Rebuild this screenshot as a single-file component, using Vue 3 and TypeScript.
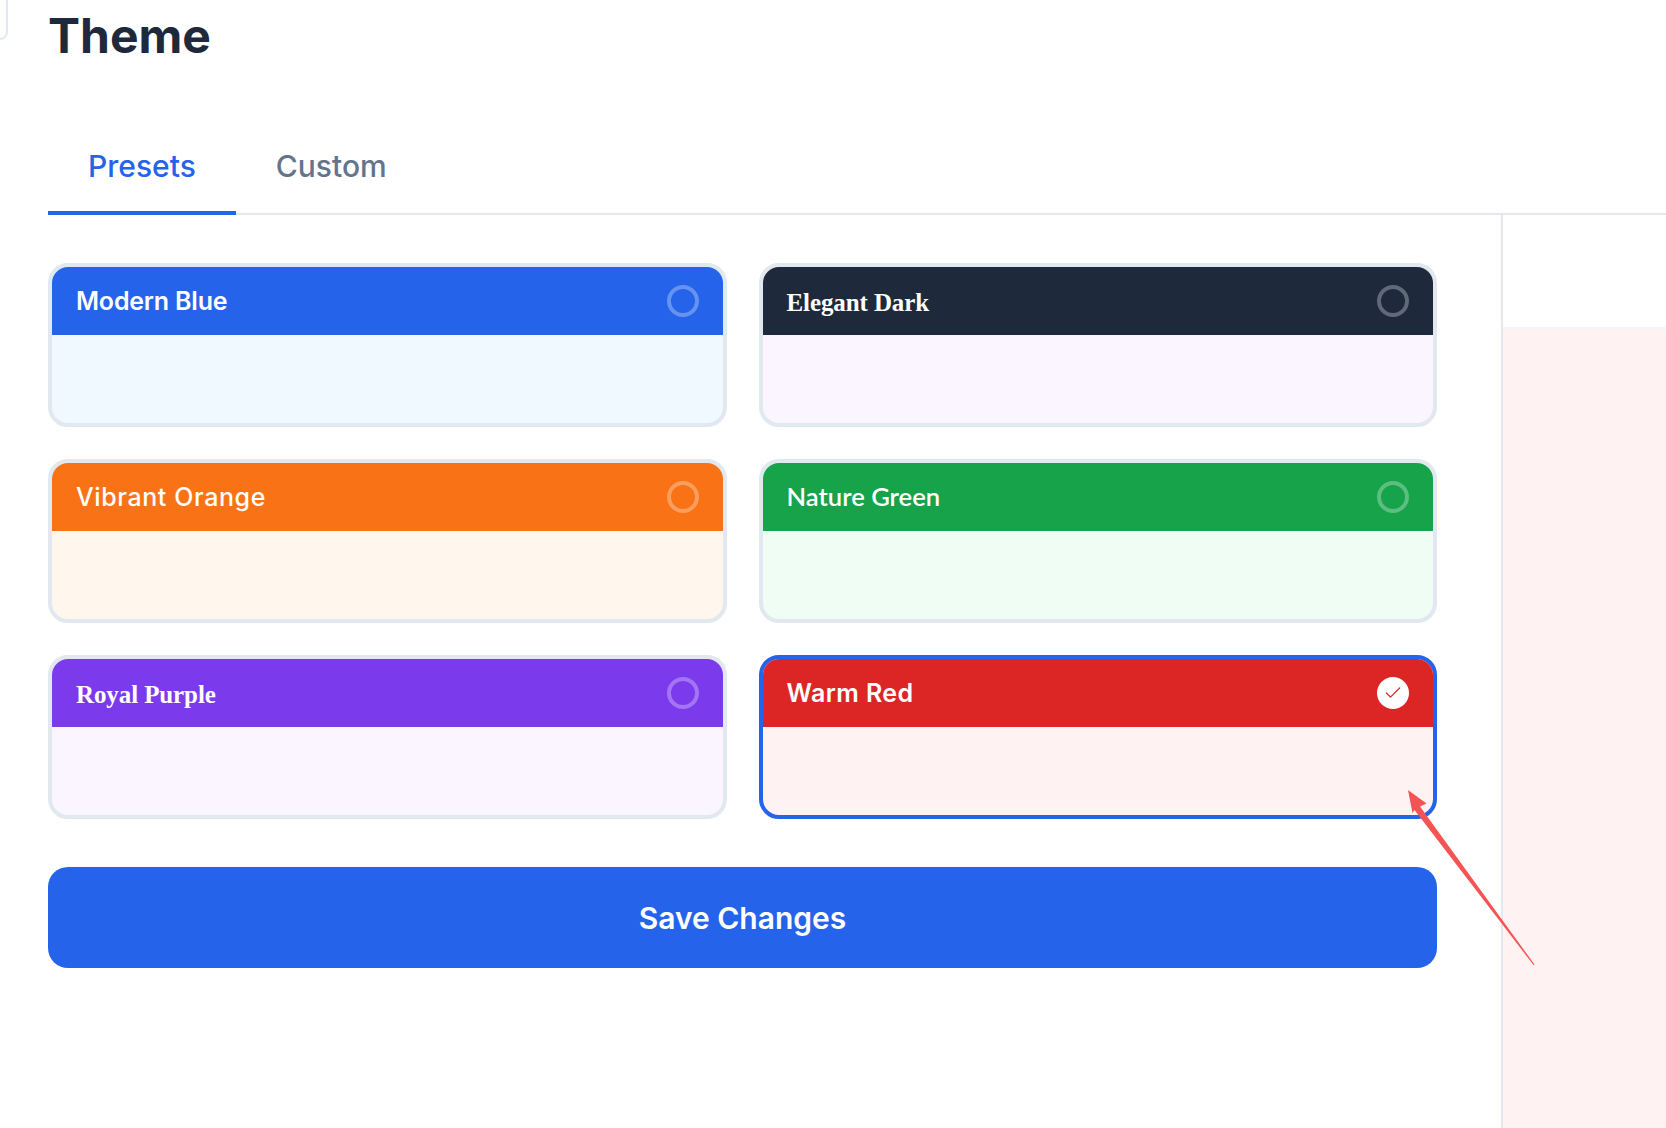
<script setup lang="ts">
import { ref } from 'vue'

interface ThemePreset {
  id: string
  name: string
  primary: string
  surface: string
  font: string
  tracking: number
}

const presets: ThemePreset[] = [
  { id: 'blue', name: 'Modern Blue', primary: '#2563eb', surface: '#f0f9ff', font: 'font-poppins', tracking: -0.2 },
  { id: 'dark', name: 'Elegant Dark', primary: '#1e293b', surface: '#faf5ff', font: 'font-playfair', tracking: -0.1 },
  { id: 'orange', name: 'Vibrant Orange', primary: '#f97316', surface: '#fff7ed', font: 'font-montserrat', tracking: 0.6 },
  { id: 'green', name: 'Nature Green', primary: '#16a34a', surface: '#f0fdf4', font: 'font-raleway', tracking: 0 },
  { id: 'purple', name: 'Royal Purple', primary: '#7c3aed', surface: '#faf5ff', font: 'font-playfair', tracking: -0.1 },
  { id: 'red', name: 'Warm Red', primary: '#dc2626', surface: '#fef2f2', font: 'font-poppins', tracking: 0.4 },
]

const selected = ref('red')
const tab = ref('presets')
</script>

<template>
  <div class="page">
    <div class="corner-box"></div>
    <h1 class="title">Theme</h1>

    <div class="tabs">
      <button class="tab" :class="{ active: tab === 'presets' }" @click="tab = 'presets'">Presets</button>
      <button class="tab" :class="{ active: tab === 'custom' }" @click="tab = 'custom'">Custom</button>
    </div>

    <div class="main">
      <div class="editor">
        <div class="preset-grid">
          <div
            v-for="preset in presets"
            :key="preset.id"
            class="preset-card"
            :class="{ selected: selected === preset.id }"
            :style="{ background: preset.surface }"
            @click="selected = preset.id"
          >
            <div class="preset-head" :style="{ background: preset.primary }">
              <span class="preset-name" :class="preset.font" :style="{ letterSpacing: preset.tracking + 'px' }">{{ preset.name }}</span>
              <span v-if="selected === preset.id" class="radio checked">
                <svg width="20" height="20" viewBox="0 0 24 24" fill="none" :stroke="preset.primary" stroke-width="1.5" stroke-linecap="round" stroke-linejoin="round">
                  <path d="M20 6 9 17l-5-5" />
                </svg>
              </span>
              <span v-else class="radio"></span>
            </div>
          </div>
        </div>
        <button class="save-btn">Save Changes</button>
      </div>

      <div class="preview">
        <div class="preview-bar"></div>
        <div class="preview-body"></div>
      </div>
    </div>

    <!-- annotation arrow -->
    <svg class="arrow" width="1666" height="1128" viewBox="0 0 1666 1128">
      <path d="M1408 790 L1426.5 803.5 L1420 806.5 L1534.5 964.5 L1533.5 965 L1414.5 810 L1412.5 813 Z" fill="#f55454" />
    </svg>
  </div>
</template>

<style scoped>
.page {
  position: relative;
  height: 1128px;
  overflow: hidden;
  background: #fff;
  font-family: Inter, 'Liberation Sans', sans-serif;
}

.corner-box {
  position: absolute;
  left: -20px;
  top: -20px;
  width: 28px;
  height: 60px;
  box-sizing: border-box;
  border: 2px solid #e2e8f0;
  border-radius: 8px;
}

.title {
  margin: 0 0 47px 48px;
  font-size: 48px;
  line-height: 72px;
  font-weight: 700;
  color: #1e293b;
}

.tabs {
  display: flex;
  margin-left: 48px;
  border-bottom: 2px solid #e2e8f0;
}

.tab {
  margin-bottom: -2px;
  padding: 29px 40px 27px;
  border: 0;
  border-bottom: 4px solid transparent;
  background: none;
  font-family: inherit;
  font-size: 30px;
  line-height: 36px;
  font-weight: 500;
  color: #64748b;
  cursor: pointer;
}

.tab.active {
  color: #2563eb;
  border-bottom-color: #2563eb;
}

.main {
  display: flex;
  height: 915px;
}

.editor {
  width: 1455px;
  box-sizing: border-box;
  padding: 48px 64px 0 0;
  margin-left: 48px;
  border-right: 2px solid #e2e8f0;
}

.preset-grid {
  display: grid;
  grid-template-columns: 1fr 1fr;
  gap: 32px;
  margin-bottom: 48px;
}

.preset-card {
  height: 164px;
  box-sizing: border-box;
  border: 4px solid #e2e8f0;
  border-radius: 20px;
  overflow: hidden;
  cursor: pointer;
}

.preset-card.selected {
  border-color: #2563eb;
}

.preset-head {
  display: flex;
  align-items: center;
  justify-content: space-between;
  height: 68px;
  padding: 0 24px;
  color: #fff;
}

.preset-name {
  line-height: 32px;
}

.font-poppins {
  font-family: Inter, sans-serif;
  font-size: 25px;
  font-weight: 600;
}

.font-playfair {
  position: relative;
  top: 2px;
  font-family: 'Liberation Serif', serif;
  font-size: 25px;
  font-weight: 700;
}

.font-montserrat {
  font-family: Inter, sans-serif;
  font-size: 25px;
  font-weight: 500;
}

.font-raleway {
  position: relative;
  top: -1px;
  font-family: Lato, sans-serif;
  font-size: 25.6px;
  font-weight: 600;
}

.radio {
  display: flex;
  align-items: center;
  justify-content: center;
  width: 32px;
  height: 32px;
  box-sizing: border-box;
  border: 4px solid rgba(255, 255, 255, 0.3);
  border-radius: 50%;
}

.radio.checked {
  border: 0;
  background: #fff;
}

.save-btn {
  display: block;
  width: 100%;
  height: 101px;
  border: 0;
  border-radius: 20px;
  background: #2563eb;
  color: #fff;
  font-family: inherit;
  font-size: 30px;
  font-weight: 600;
  cursor: pointer;
}

.preview {
  flex: 1;
  display: flex;
  flex-direction: column;
}

.preview-bar {
  height: 114px;
  box-sizing: border-box;
  border-bottom: 2px solid #f1f5f9;
}

.preview-body {
  flex: 1;
  background: #fef2f2;
}

.arrow {
  position: absolute;
  left: 0;
  top: 0;
  pointer-events: none;
}
</style>
